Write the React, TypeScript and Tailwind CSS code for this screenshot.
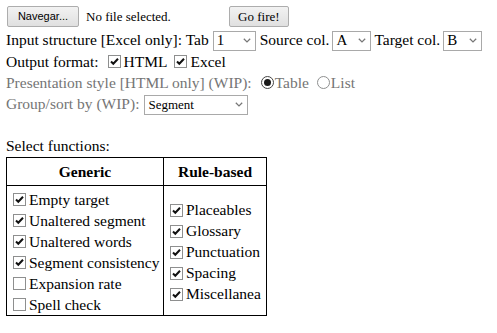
import React from 'react';

const serif = { fontFamily: '"Liberation Serif", "Times New Roman", serif' };

function Check({ on = false }: { on?: boolean }) {
  return (
    <span className="inline-flex h-[13px] w-[13px] shrink-0 items-center justify-center border border-[#8e8f8f] bg-white">
      {on && (
        <svg viewBox="0 0 11 11" className="h-[11px] w-[11px]">
          <path d="M2 5.5 L4.3 7.8 L9 2.8" fill="none" stroke="#111" strokeWidth="2" />
        </svg>
      )}
    </span>
  );
}

function Radio({ on = false }: { on?: boolean }) {
  return (
    <span
      className={`inline-flex h-[13px] w-[13px] shrink-0 items-center justify-center rounded-full border bg-white ${on ? 'border-[#444]' : 'border-[#8e8f8f]'}`}
    >
      {on && <span className="h-[7px] w-[7px] rounded-full bg-[#1a1a1a]" />}
    </span>
  );
}

function Select({ value, width, small = false }: { value: string; width: string; small?: boolean }) {
  return (
    <span
      className={`inline-flex h-[20px] items-center justify-between border border-[#a9a9a9] bg-white pl-[3px] pr-[4px] text-black ${width} ${small ? 'text-[13px]' : 'text-[15px]'}`}
    >
      <span className="leading-none">{value}</span>
      <svg viewBox="0 0 8 5" className="h-[5px] w-[8px]">
        <path d="M0.8 0.8 L4 3.9 L7.2 0.8" fill="none" stroke="#777" strokeWidth="1.3" />
      </svg>
    </span>
  );
}

function Option({ label, on }: { label: string; on?: boolean }) {
  return (
    <div className="flex h-[21px] items-center gap-[3px] whitespace-nowrap">
      <Check on={on} />
      <span>{label}</span>
    </div>
  );
}

const generic = [
  { label: 'Empty target', on: true },
  { label: 'Unaltered segment', on: true },
  { label: 'Unaltered words', on: true },
  { label: 'Segment consistency', on: true },
  { label: 'Expansion rate', on: false },
  { label: 'Spell check', on: false },
];

const ruleBased = ['Placeables', 'Glossary', 'Punctuation', 'Spacing', 'Miscellanea'];

export default function App() {
  return (
    <div className="min-h-[333px] w-[497px] bg-white pl-[6px] text-[15.5px] text-black" style={serif}>
      <div className="flex h-[29px] items-start pt-[6px]">
        <button
          className="ml-[1px] flex h-[21px] w-[72px] items-center justify-center rounded-[2px] border border-[#adadad] bg-gradient-to-b from-[#f2f2f2] to-[#e0e0e0] text-[11px] text-black"
          style={{ fontFamily: '"Liberation Sans", Arial, sans-serif' }}
        >
          Navegar...
        </button>
        <span className="ml-[7px] flex h-[21px] items-center text-[13px]">No file selected.</span>
        <button className="ml-[58px] flex h-[21px] w-[60px] items-center justify-center rounded-[2px] border border-[#adadad] bg-gradient-to-b from-[#f2f2f2] to-[#e0e0e0] text-[13px] text-black">
          Go fire!
        </button>
      </div>

      <div className="flex h-[22px] items-center">
        <span>Input structure [Excel only]: Tab</span>
        <span className="ml-[4px]">
          <Select value="1" width="w-[43px]" />
        </span>
        <span className="ml-[4px]">Source col.</span>
        <span className="ml-[3px]">
          <Select value="A" width="w-[39px]" />
        </span>
        <span className="ml-[3px]">Target col.</span>
        <span className="ml-[3px]">
          <Select value="B" width="w-[39px]" />
        </span>
      </div>

      <div className="flex h-[21px] items-center">
        <span>Output format:</span>
        <span className="ml-[9px] flex items-center gap-[3px]">
          <Check on />
          <span>HTML</span>
        </span>
        <span className="ml-[7px] flex items-center gap-[3px]">
          <Check on />
          <span>Excel</span>
        </span>
      </div>

      <div className="flex h-[21px] items-center text-[#757575]">
        <span>Presentation style [HTML only] (WIP):</span>
        <span className="ml-[9px] flex items-center gap-[1px]">
          <Radio on />
          <span>Table</span>
        </span>
        <span className="ml-[8px] flex items-center gap-[1px]">
          <Radio />
          <span>List</span>
        </span>
      </div>

      <div className="flex h-[22px] items-center text-[#757575]">
        <span>Group/sort by (WIP):</span>
        <span className="ml-[5px]">
          <Select value="Segment" width="w-[104px]" small />
        </span>
      </div>

      <div className="mt-[20px] flex h-[22px] items-center">Select functions:</div>

      <table className="border-collapse border border-black">
        <thead>
          <tr className="h-[28px]">
            <th className="w-[157px] border border-black text-center font-bold">Generic</th>
            <th className="w-[103px] border border-black text-center font-bold">Rule-based</th>
          </tr>
        </thead>
        <tbody>
          <tr>
            <td className="border border-black pl-[6px] pt-[3px] align-middle">
              {generic.map((g) => (
                <Option key={g.label} label={g.label} on={g.on} />
              ))}
            </td>
            <td className="border border-black pl-[6px] pt-[3px] align-middle">
              {ruleBased.map((r) => (
                <Option key={r} label={r} on />
              ))}
            </td>
          </tr>
        </tbody>
      </table>
    </div>
  );
}
